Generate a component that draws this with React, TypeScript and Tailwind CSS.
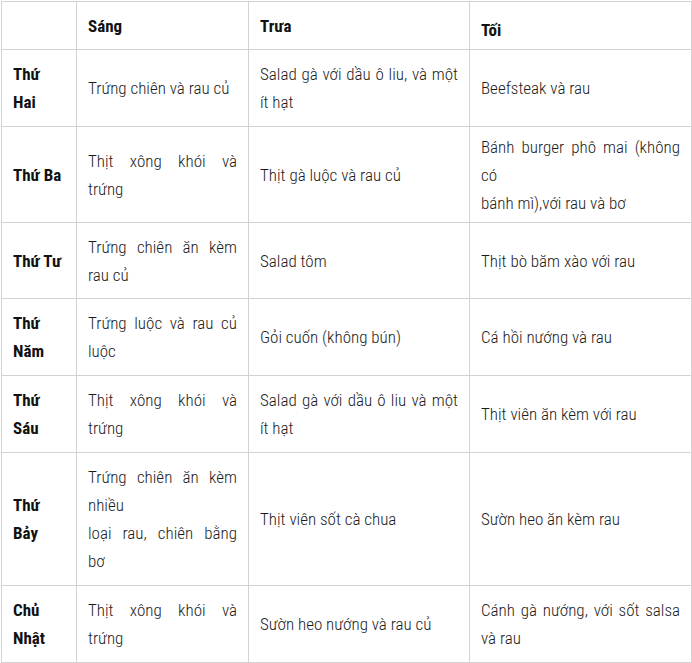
type Line = { text: string; justify?: boolean }
type Row = { day: string[]; height: string; cells: Line[][] }

const rows: Row[] = [
  {
    day: ['Thứ', 'Hai'],
    height: 'h-[77px]',
    cells: [
      [{ text: 'Trứng chiên và rau củ' }],
      [{ text: 'Salad gà với dầu ô liu, và một', justify: true }, { text: 'ít hạt' }],
      [{ text: 'Beefsteak và rau' }],
    ],
  },
  {
    day: ['Thứ Ba'],
    height: 'h-[96px]',
    cells: [
      [{ text: 'Thịt xông khói và', justify: true }, { text: 'trứng' }],
      [{ text: 'Thịt gà luộc và rau củ' }],
      [
        { text: 'Bánh burger phô mai (không', justify: true },
        { text: 'có' },
        { text: 'bánh mì),với rau và bơ' },
      ],
    ],
  },
  {
    day: ['Thứ Tư'],
    height: 'h-[76px]',
    cells: [
      [{ text: 'Trứng chiên ăn kèm', justify: true }, { text: 'rau củ' }],
      [{ text: 'Salad tôm' }],
      [{ text: 'Thịt bò băm xào với rau' }],
    ],
  },
  {
    day: ['Thứ', 'Năm'],
    height: 'h-[77px]',
    cells: [
      [{ text: 'Trứng luộc và rau củ', justify: true }, { text: 'luộc' }],
      [{ text: 'Gỏi cuốn (không bún)' }],
      [{ text: 'Cá hồi nướng và rau' }],
    ],
  },
  {
    day: ['Thứ', 'Sáu'],
    height: 'h-[77px]',
    cells: [
      [{ text: 'Thịt xông khói và', justify: true }, { text: 'trứng' }],
      [{ text: 'Salad gà với dầu ô liu và một', justify: true }, { text: 'ít hạt' }],
      [{ text: 'Thịt viên ăn kèm với rau' }],
    ],
  },
  {
    day: ['Thứ', 'Bảy'],
    height: 'h-[133px]',
    cells: [
      [
        { text: 'Trứng chiên ăn kèm', justify: true },
        { text: 'nhiều' },
        { text: 'loại rau, chiên bằng', justify: true },
        { text: 'bơ' },
      ],
      [{ text: 'Thịt viên sốt cà chua' }],
      [{ text: 'Sườn heo ăn kèm rau' }],
    ],
  },
  {
    day: ['Chủ', 'Nhật'],
    height: 'h-[77px]',
    cells: [
      [{ text: 'Thịt xông khói và', justify: true }, { text: 'trứng' }],
      [{ text: 'Sườn heo nướng và rau củ' }],
      [{ text: 'Cánh gà nướng, với sốt salsa', justify: true }, { text: 'và rau' }],
    ],
  },
]

const font =
  "font-['Roboto_Condensed','Noto_Sans','Open_Sans',sans-serif] [font-stretch:condensed]"

const Cell = ({ lines }: { lines: Line[] }) => (
  <td className="border border-[#d3d3d3] px-[11px] align-middle font-light">
    {lines.map((line, i) => (
      <div
        key={i}
        className={
          line.justify
            ? 'whitespace-nowrap text-justify [text-align-last:justify]'
            : 'whitespace-nowrap text-left'
        }
      >
        {line.text}
      </div>
    ))}
  </td>
)

export default function App() {
  return (
    <div className={`min-h-screen bg-white pl-px pt-px ${font}`}>
      <table className="table-fixed border-collapse text-[17px] leading-[28px] text-[#1c1c1c]">
        <colgroup>
          <col className="w-[75px]" />
          <col className="w-[172px]" />
          <col className="w-[221px]" />
          <col className="w-[222px]" />
        </colgroup>
        <thead>
          <tr className="h-[48px]">
            <th className="border border-[#d3d3d3]"></th>
            <th className="border border-[#d3d3d3] px-[11px] text-left font-bold text-[#111]">Sáng</th>
            <th className="border border-[#d3d3d3] px-[11px] text-left font-bold text-[#111]">Trưa</th>
            <th className="border border-[#d3d3d3] px-[11px] pt-2 text-left font-bold text-[#111]">Tối</th>
          </tr>
        </thead>
        <tbody>
          {rows.map((row) => (
            <tr key={row.day.join(' ')} className={row.height}>
              <td className="border border-[#d3d3d3] px-[11px] align-middle font-bold text-[#111]">
                {row.day.map((d) => (
                  <div key={d} className="whitespace-nowrap">
                    {d}
                  </div>
                ))}
              </td>
              {row.cells.map((lines, i) => (
                <Cell key={i} lines={lines} />
              ))}
            </tr>
          ))}
        </tbody>
      </table>
    </div>
  )
}
